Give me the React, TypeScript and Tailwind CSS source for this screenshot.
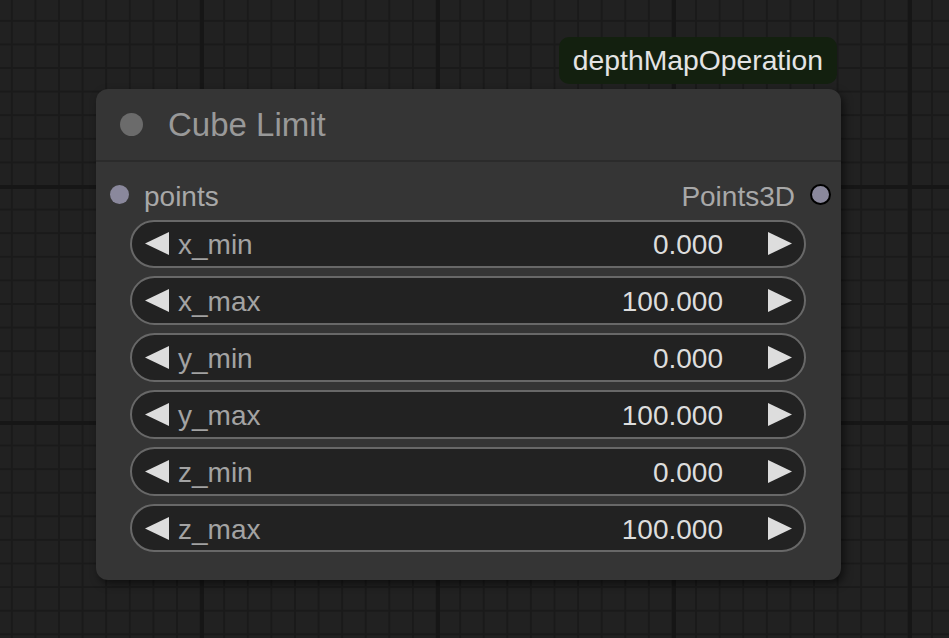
const widgets = [
  { name: "x_min", value: "0.000" },
  { name: "x_max", value: "100.000" },
  { name: "y_min", value: "0.000" },
  { name: "y_max", value: "100.000" },
  { name: "z_min", value: "0.000" },
  { name: "z_max", value: "100.000" },
];

function Arrow({ dir }: { dir: "left" | "right" }) {
  return (
    <svg width="24" height="23" viewBox="0 0 24 23" className="shrink-0">
      <polygon
        points={dir === "left" ? "24,0 24,23 0,11.5" : "0,0 0,23 24,11.5"}
        fill="#dddddd"
      />
    </svg>
  );
}

function NumberWidget({ name, value }: { name: string; value: string }) {
  return (
    <div className="flex h-[48.5px] items-center rounded-full border-2 border-[#686868] bg-[#222222] pl-[13px] pr-[12px] text-[28px] leading-none">
      <Arrow dir="left" />
      <span className="ml-[9px] pt-[3px] text-[#a3a3a3]">{name}</span>
      <span className="ml-auto mr-[45px] pt-[3px] text-[#dddddd]">{value}</span>
      <Arrow dir="right" />
    </div>
  );
}

export default function App() {
  return (
    <div className="relative h-[638px] w-[949px] overflow-hidden bg-[#212121] bg-[image:linear-gradient(to_right,#161616_4px,transparent_4px),linear-gradient(to_bottom,#161616_4px,transparent_4px),linear-gradient(to_right,#1a1a1a_2px,transparent_2px),linear-gradient(to_bottom,#1a1a1a_2px,transparent_2px)] bg-[size:236px_236px,236px_236px,23.6px_23.6px,23.6px_23.6px] bg-[position:200px_185px,200px_185px,199.6px_185px,199.6px_185px] font-['Liberation_Sans',Arial,sans-serif]">
      <div className="absolute left-[96px] top-[89px] w-[745px] rounded-[12px] bg-[#353535] pb-[27.5px] shadow-[3px_4px_8px_rgba(0,0,0,0.55)]">
        <div className="absolute right-[4px] top-[-52px] flex h-[47px] items-center rounded-[10px] bg-[#13200f] px-[14px] text-[28.3px] leading-none text-[#e4e4e4]">
          depthMapOperation
        </div>

        <div className="flex h-[73px] items-center border-b-2 border-[#2b2b2b] pl-[23.5px]">
          <div className="h-[23px] w-[23px] rounded-full bg-[#6b6b6b]" />
          <span className="ml-[25.5px] text-[33px] leading-none text-[#999999]">
            Cube Limit
          </span>
        </div>

        <div className="mt-[12px] flex h-[40px] items-center pl-[13.5px] pr-[10.5px] text-[28px] leading-none text-[#a8a8a8]">
          <div className="h-[19px] w-[19px] rounded-full bg-[#8a889c]" />
          <span className="ml-[15.5px] pt-[5px]">points</span>
          <span className="ml-auto pt-[5px]">Points3D</span>
          <div className="ml-[14.5px] h-[21px] w-[21px] rounded-full border-2 border-black bg-[#8a889c]" />
        </div>

        <div className="ml-[34px] mr-[35px] mt-[5.5px] flex flex-col gap-[8.4px]">
          {widgets.map((w) => (
            <NumberWidget key={w.name} name={w.name} value={w.value} />
          ))}
        </div>
      </div>
    </div>
  );
}
